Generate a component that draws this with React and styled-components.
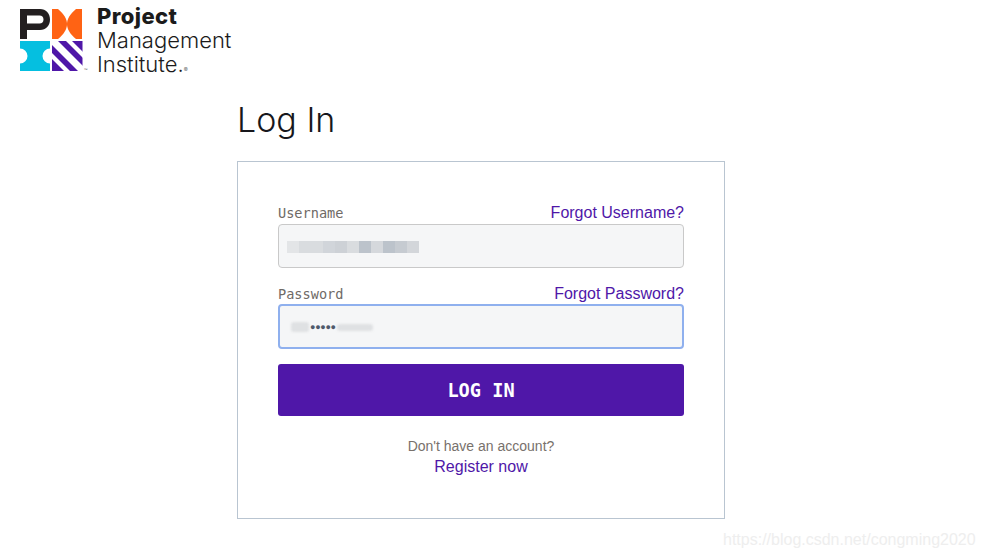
import styled, { createGlobalStyle } from "styled-components";

const GlobalStyle = createGlobalStyle`
  html, body {
    margin: 0;
    padding: 0;
    background: #fff;
  }
  body {
    font-family: "Liberation Sans", Arial, sans-serif;
  }
`;

const Page = styled.div`
  position: relative;
  width: 983px;
  height: 558px;
  overflow: hidden;
`;

const Header = styled.header`
  display: flex;
  align-items: flex-start;
  gap: 9px;
  padding: 9px 0 0 20px;
  height: 83px;
  box-sizing: border-box;
`;

const LogoWords = styled.div`
  display: flex;
  flex-direction: column;
  font-family: Inter, sans-serif;
  font-size: 22px;
  line-height: 24px;
  color: #1b1b1b;
  margin-top: -5px;
`;

const LogoWord = styled.span`
  font-weight: ${(p) => (p.$bold ? 800 : 300)};
  letter-spacing: ${(p) => (p.$bold ? "0.4px" : "0")};
`;

const Registered = styled.span`
  font-size: 6px;
  font-weight: 400;
  color: #666;
`;

const Main = styled.main`
  width: 488px;
  margin-left: 237px;
`;

const Title = styled.h1`
  margin: 0;
  height: 78px;
  padding-top: 16px;
  box-sizing: border-box;
  font-family: Inter, sans-serif;
  font-weight: 300;
  font-size: 34px;
  line-height: 42px;
  color: #17171c;
`;

const Card = styled.form`
  height: 358px;
  box-sizing: border-box;
  border: 1px solid #b9c5d1;
  padding: 41px 40px 0;
  display: flex;
  flex-direction: column;
`;

const LabelRow = styled.div`
  display: flex;
  justify-content: space-between;
  align-items: baseline;
  height: ${(p) => (p.$tight ? "20px" : "21px")};
  line-height: 19px;
`;

const Label = styled.label`
  font-family: "DejaVu Sans Mono", monospace;
  font-size: 13.6px;
  color: #6f6a66;
`;

const LinkText = styled.a`
  font-size: 16px;
  color: #4f17a8;
  text-decoration: none;
`;

const Field = styled.div`
  display: flex;
  align-items: center;
  box-sizing: border-box;
  height: ${(p) => (p.$focused ? "45px" : "44px")};
  margin-bottom: ${(p) => (p.$focused ? "15px" : "16px")};
  padding-left: ${(p) => (p.$focused ? "11px" : "8px")};
  background: #f5f6f7;
  border: ${(p) => (p.$focused ? "2px solid #8fb0ee" : "1px solid #c9c9c9")};
  border-radius: 4px;
`;

const Cell = styled.span`
  width: 12px;
  height: 12px;
  background: ${(p) => p.$color};
`;

const SmudgeRow = styled.div`
  display: flex;
  align-items: center;
  padding-top: 1px;
`;

const Smudge = styled.span`
  display: block;
  width: ${(p) => p.$w}px;
  height: ${(p) => p.$h}px;
  background: #dfe1e3;
  border-radius: 3px;
  filter: blur(1px);
`;

const Dots = styled.span`
  font-size: 9px;
  line-height: 10px;
  letter-spacing: -0.3px;
  color: #4f5a6b;
  margin: 0 1px;
`;

const SubmitButton = styled.button`
  height: 52px;
  border: 0;
  border-radius: 3px;
  background: #4f17a8;
  color: #fff;
  font-family: "DejaVu Sans Mono", monospace;
  font-weight: 700;
  font-size: 18.6px;
`;

const Footer = styled.div`
  display: flex;
  flex-direction: column;
  align-items: center;
  gap: 1px;
  margin-top: 20px;
  line-height: 20px;
`;

const Hint = styled.span`
  font-size: 14px;
  color: #78716c;
`;

const Watermark = styled.div`
  position: absolute;
  left: 723px;
  top: 530px;
  font-size: 16px;
  line-height: 20px;
  color: #eeeeee;
`;

const blurCells = ["#e3e5e7", "#d9dcdf", "#d9dcdf", "#d1d5da", "#cdd1d6", "#d9dcdf", "#bcc3cb", "#d5d8dc", "#bcc3cb", "#c6cbd1", "#d3d6da"];

const Logo = () => (
  <svg width="68" height="64" viewBox="0 0 68 64">
    <defs>
      <clipPath id="stripes-box">
        <rect x="32" y="32" width="30.5" height="30" />
      </clipPath>
    </defs>
    <path
      fillRule="evenodd"
      fill="#231f20"
      d="M0 0H20C26 0 30 4.500 30 10.500C30 16.500 26 21 20 21H7V30H0ZM7 6.500V14.500H19.500C22 14.500 23.500 13 23.500 10.500C23.500 8 22 6.500 19.500 6.500Z"
    />
    <path fill="#ff6314" d="M32 0H38C44 5 47 10 47 15C47 20 44 25 38 30H32Z" />
    <path fill="#ff6314" d="M62 0H56C50 5 47 10 47 15C47 20 50 25 56 30H62Z" />
    <path
      fill="#05bfe0"
      d="M0 32H30V39.500A7.500 7.500 0 0 0 30 54.500V62H0V54.500A7.500 7.500 0 0 0 0 39.500Z"
    />
    <g clipPath="url(#stripes-box)" fill="#4f17a8">
      <path d="M52 32H63V43Z" />
      <path d="M38 32H46L63 49V57Z" />
      <path d="M32 36L58 62H50L32 44Z" />
      <path d="M32 50L44 62H32Z" />
    </g>
    <text x="63.500" y="62" fontSize="4" fill="#555" fontFamily="Liberation Sans">™</text>
  </svg>
);

const App = () => {
  return (
    <Page>
      <GlobalStyle />
      <Header>
        <Logo />
        <LogoWords>
          <LogoWord $bold>Project</LogoWord>
          <LogoWord>Management</LogoWord>
          <LogoWord>
            Institute.<Registered>®</Registered>
          </LogoWord>
        </LogoWords>
      </Header>
      <Main>
        <Title>Log In</Title>
        <Card onSubmit={(e) => e.preventDefault()}>
          <LabelRow>
            <Label>Username</Label>
            <LinkText href="#">Forgot Username?</LinkText>
          </LabelRow>
          <Field>
            <SmudgeRow>
              {blurCells.map((color, i) => (
                <Cell key={i} $color={color} />
              ))}
            </SmudgeRow>
          </Field>
          <LabelRow $tight>
            <Label>Password</Label>
            <LinkText href="#">Forgot Password?</LinkText>
          </LabelRow>
          <Field $focused>
            <SmudgeRow>
              <Smudge $w={18} $h={10} />
              <Dots>●●●●●</Dots>
              <Smudge $w={36} $h={7} />
            </SmudgeRow>
          </Field>
          <SubmitButton type="submit">LOG IN</SubmitButton>
          <Footer>
            <Hint>Don't have an account?</Hint>
            <LinkText href="#">Register now</LinkText>
          </Footer>
        </Card>
      </Main>
      <Watermark>https://blog.csdn.net/congming2020</Watermark>
    </Page>
  );
};

export default App;
